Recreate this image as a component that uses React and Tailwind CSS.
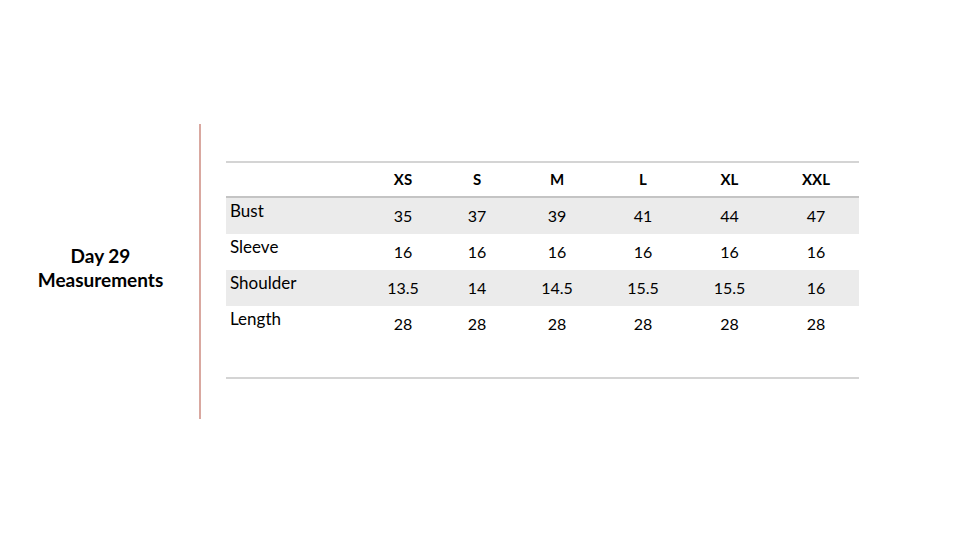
export default function App() {
  const sizes = ["XS", "S", "M", "L", "XL", "XXL"];
  const widths = ["w-[74px]", "w-[74px]", "w-[86px]", "w-[86px]", "w-[87px]", "w-[86px]"];
  const rows = [
    { label: "Bust", values: ["35", "37", "39", "41", "44", "47"], shade: true },
    { label: "Sleeve", values: ["16", "16", "16", "16", "16", "16"], shade: false },
    { label: "Shoulder", values: ["13.5", "14", "14.5", "15.5", "15.5", "16"], shade: true },
    { label: "Length", values: ["28", "28", "28", "28", "28", "28"], shade: false },
  ];

  return (
    <div
      className="w-[960px] h-[540px] bg-white flex items-start text-black"
      style={{ fontFamily: "Lato, 'Open Sans', sans-serif" }}
    >
      {/* Title */}
      <div className="w-[201px] pt-[244px] text-center font-bold text-[19px] leading-[24px]">
        <div>Day 29</div>
        <div>Measurements</div>
      </div>

      {/* Divider */}
      <div className="mt-[124px] -ml-[2px] w-[2px] h-[295px] bg-[#d9a8a0]" />

      {/* Size table */}
      <div className="ml-[25px] mt-[161px] w-[633px] border-t-2 border-b-2 border-[#d4d4d4]">
        <div className="flex h-[35px] items-center border-b-2 border-[#c4c4c4] font-bold text-[15px]">
          <div className="w-[140px]" />
          {sizes.map((s, i) => (
            <div key={s} className={`${widths[i]} text-center`}>
              {s}
            </div>
          ))}
        </div>

        {rows.map((row) => (
          <div
            key={row.label}
            className={`flex h-[36px] ${row.shade ? "bg-[#ebebeb]" : ""}`}
          >
            <div className="w-[140px] pl-[4px] pt-[2px] text-[17px] leading-[22px]">{row.label}</div>
            {row.values.map((v, i) => (
              <div key={i} className={`${widths[i]} flex items-center justify-center text-[16px]`}>
                {v}
              </div>
            ))}
          </div>
        ))}

        <div className="h-[35px]" />
      </div>
    </div>
  );
}
